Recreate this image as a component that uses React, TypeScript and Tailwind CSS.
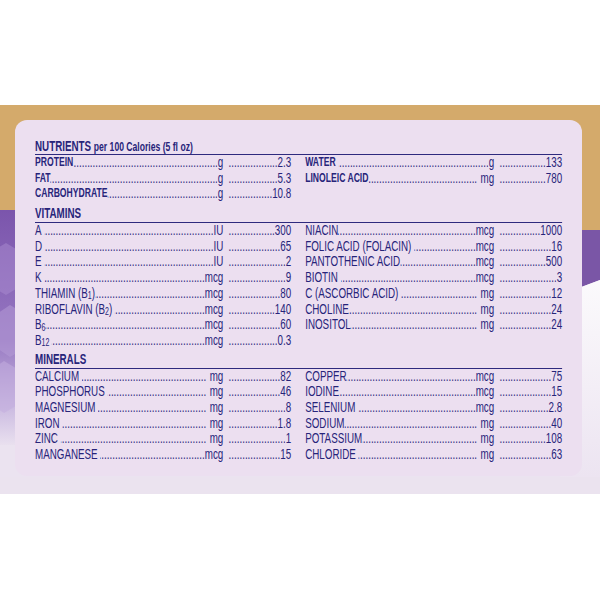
import React from "react";

const DOTS = ".".repeat(120);

type R = { n: React.ReactNode; u: string; v: string; np?: boolean; up?: boolean };

function Sub({ c }: { c: string }) {
  return <span className="relative top-[1.5px] text-[10px]">{c}</span>;
}

function Row({ r, bold, unitW }: { r: R; bold?: boolean; unitW: string }) {
  return (
    <div className="flex h-[15.7px] leading-[15.7px] whitespace-nowrap">
      <div className={`flex min-w-0 ${unitW}`}>
        <span className={`shrink-0 ${bold ? "font-bold text-[12.3px]" : ""} ${r.np ? "pr-[4px]" : ""}`}>{r.n}</span>
        <span className="flex min-w-0 flex-1 justify-end overflow-hidden">
          <span className="shrink-0">{DOTS}</span>
        </span>
        <span className={`shrink-0 ${r.up ? "pl-[5px]" : ""}`}>{r.u}</span>
      </div>
      <div className="flex min-w-0 flex-1 pl-[7px]">
        <span className="flex min-w-0 flex-1 justify-end overflow-hidden">
          <span className="shrink-0">{DOTS}</span>
        </span>
        <span className="shrink-0">{r.v}</span>
      </div>
    </div>
  );
}

function Cols({ left, right, bold }: { left: R[]; right: R[]; bold?: boolean }) {
  return (
    <div className="grid grid-cols-[366px_367px] gap-x-[20px]">
      <div className="flex flex-col">
        {left.map((r, i) => (
          <Row key={i} r={r} bold={bold} unitW="w-[269px]" />
        ))}
      </div>
      <div className="flex flex-col">
        {right.map((r, i) => (
          <Row key={i} r={r} bold={bold} unitW="w-[270px]" />
        ))}
      </div>
    </div>
  );
}

const nutL: R[] = [
  { n: "PROTEIN", u: "g", v: "2.3" },
  { n: "FAT", u: "g", v: "5.3" },
  { n: "CARBOHYDRATE", u: "g", v: "10.8" },
];
const nutR: R[] = [
  { n: "WATER", u: "g", v: "133", np: true },
  { n: "LINOLEIC ACID", u: "mg", v: "780", up: true },
];

const vitL: R[] = [
  { n: "A", u: "IU", v: "300", np: true },
  { n: "D", u: "IU", v: "65", np: true },
  { n: "E", u: "IU", v: "2", np: true },
  { n: "K", u: "mcg", v: "9", np: true },
  { n: <>THIAMIN (B<Sub c="1" />)</>, u: "mcg", v: "80" },
  { n: <>RIBOFLAVIN (B<Sub c="2" />)</>, u: "mcg", v: "140", np: true },
  { n: <>B<Sub c="6" /></>, u: "mcg", v: "60" },
  { n: <>B<Sub c="12" /></>, u: "mcg", v: "0.3", np: true },
];
const vitR: R[] = [
  { n: "NIACIN", u: "mcg", v: "1000" },
  { n: "FOLIC ACID (FOLACIN)", u: "mcg", v: "16", np: true },
  { n: "PANTOTHENIC ACID", u: "mcg", v: "500" },
  { n: "BIOTIN", u: "mcg", v: "3", np: true },
  { n: "C (ASCORBIC ACID)", u: "mg", v: "12", np: true, up: true },
  { n: "CHOLINE", u: "mg", v: "24", up: true },
  { n: "INOSITOL", u: "mg", v: "24", up: true },
];

const minL: R[] = [
  { n: "CALCIUM", u: "mg", v: "82", np: true, up: true },
  { n: "PHOSPHORUS", u: "mg", v: "46", np: true, up: true },
  { n: "MAGNESIUM", u: "mg", v: "8", np: true, up: true },
  { n: "IRON", u: "mg", v: "1.8", np: true, up: true },
  { n: "ZINC", u: "mg", v: "1", np: true, up: true },
  { n: "MANGANESE", u: "mcg", v: "15", np: true },
];
const minR: R[] = [
  { n: "COPPER", u: "mcg", v: "75" },
  { n: "IODINE", u: "mcg", v: "15" },
  { n: "SELENIUM", u: "mcg", v: "2.8", np: true },
  { n: "SODIUM", u: "mg", v: "40", up: true },
  { n: "POTASSIUM", u: "mg", v: "108", up: true },
  { n: "CHLORIDE", u: "mg", v: "63", np: true, up: true },
];

function Background() {
  return (
    <svg className="absolute inset-0 h-full w-full" viewBox="0 0 600 389" preserveAspectRatio="none">
      <defs>
        <linearGradient id="lp" x1="0" y1="0" x2="0" y2="1">
          <stop offset="0" stopColor="#7b55ac" />
          <stop offset="0.55" stopColor="#9677c2" />
          <stop offset="0.85" stopColor="#cdbde2" />
          <stop offset="1" stopColor="#e9e0ef" />
        </linearGradient>
        <linearGradient id="rw" x1="0" y1="0" x2="0" y2="1">
          <stop offset="0" stopColor="#fbfafc" />
          <stop offset="1" stopColor="#ebe2f0" />
        </linearGradient>
      </defs>
      <rect x="0" y="0" width="600" height="389" fill="#ebe3f0" />
      <polygon points="0,0 600,0 600,126 0,106" fill="#d4aa6b" />
      <polygon points="0,105 60,105 60,340 0,340" fill="url(#lp)" />
      <polygon points="-14,150 6,138 26,150 26,178 6,190 -14,178" fill="#a98ccf" opacity="0.5" />
      <polygon points="-8,212 10,200 30,212 30,240 10,252 -8,240" fill="#b49ad6" opacity="0.55" />
      <polygon points="-14,268 4,256 24,268 24,296 4,308 -14,296" fill="#c2addf" opacity="0.55" />
      <polygon points="560,125 600,125 600,175 560,190" fill="#7a56a6" />
      <polygon points="560,190 600,175 600,389 560,389" fill="url(#rw)" />
      <rect x="0" y="372" width="600" height="17" fill="#ebe3ef" />
    </svg>
  );
}

export default function App() {
  return (
    <div
      className="h-[600px] w-[600px] overflow-hidden bg-white text-[14px] text-[#27247a]"
      style={{ fontFamily: '"Liberation Sans", Arial, sans-serif' }}
    >
      <div className="h-[105px]" />
      <div className="relative h-[389px] px-[15px] pt-[15px]">
        <Background />
        <div className="relative h-[356px] w-[567px] rounded-[12px] bg-[#ecdff0] pl-[20px] pt-[18px]">
          <div className="w-[753px] origin-left [transform:scaleX(0.7)]">
            <div className="h-[17px] border-b-[1.5px] border-[#2e2a7e] font-bold leading-[16px] whitespace-nowrap">
              <span className="text-[14px]">NUTRIENTS</span>{" "}
              <span className="text-[12.3px]">per 100 Calories (5 fl oz)</span>
            </div>
            <Cols left={nutL} right={nutR} bold />
            <div className="mt-[2px] h-[19px] border-b-[1.5px] border-[#2e2a7e] text-[14px] font-bold leading-[18px]">
              VITAMINS
            </div>
            <Cols left={vitL} right={vitR} />
            <div className="mt-[1px] h-[19px] border-b-[1.5px] border-[#2e2a7e] text-[14px] font-bold leading-[18px]">
              MINERALS
            </div>
            <Cols left={minL} right={minR} />
          </div>
        </div>
      </div>
    </div>
  );
}
